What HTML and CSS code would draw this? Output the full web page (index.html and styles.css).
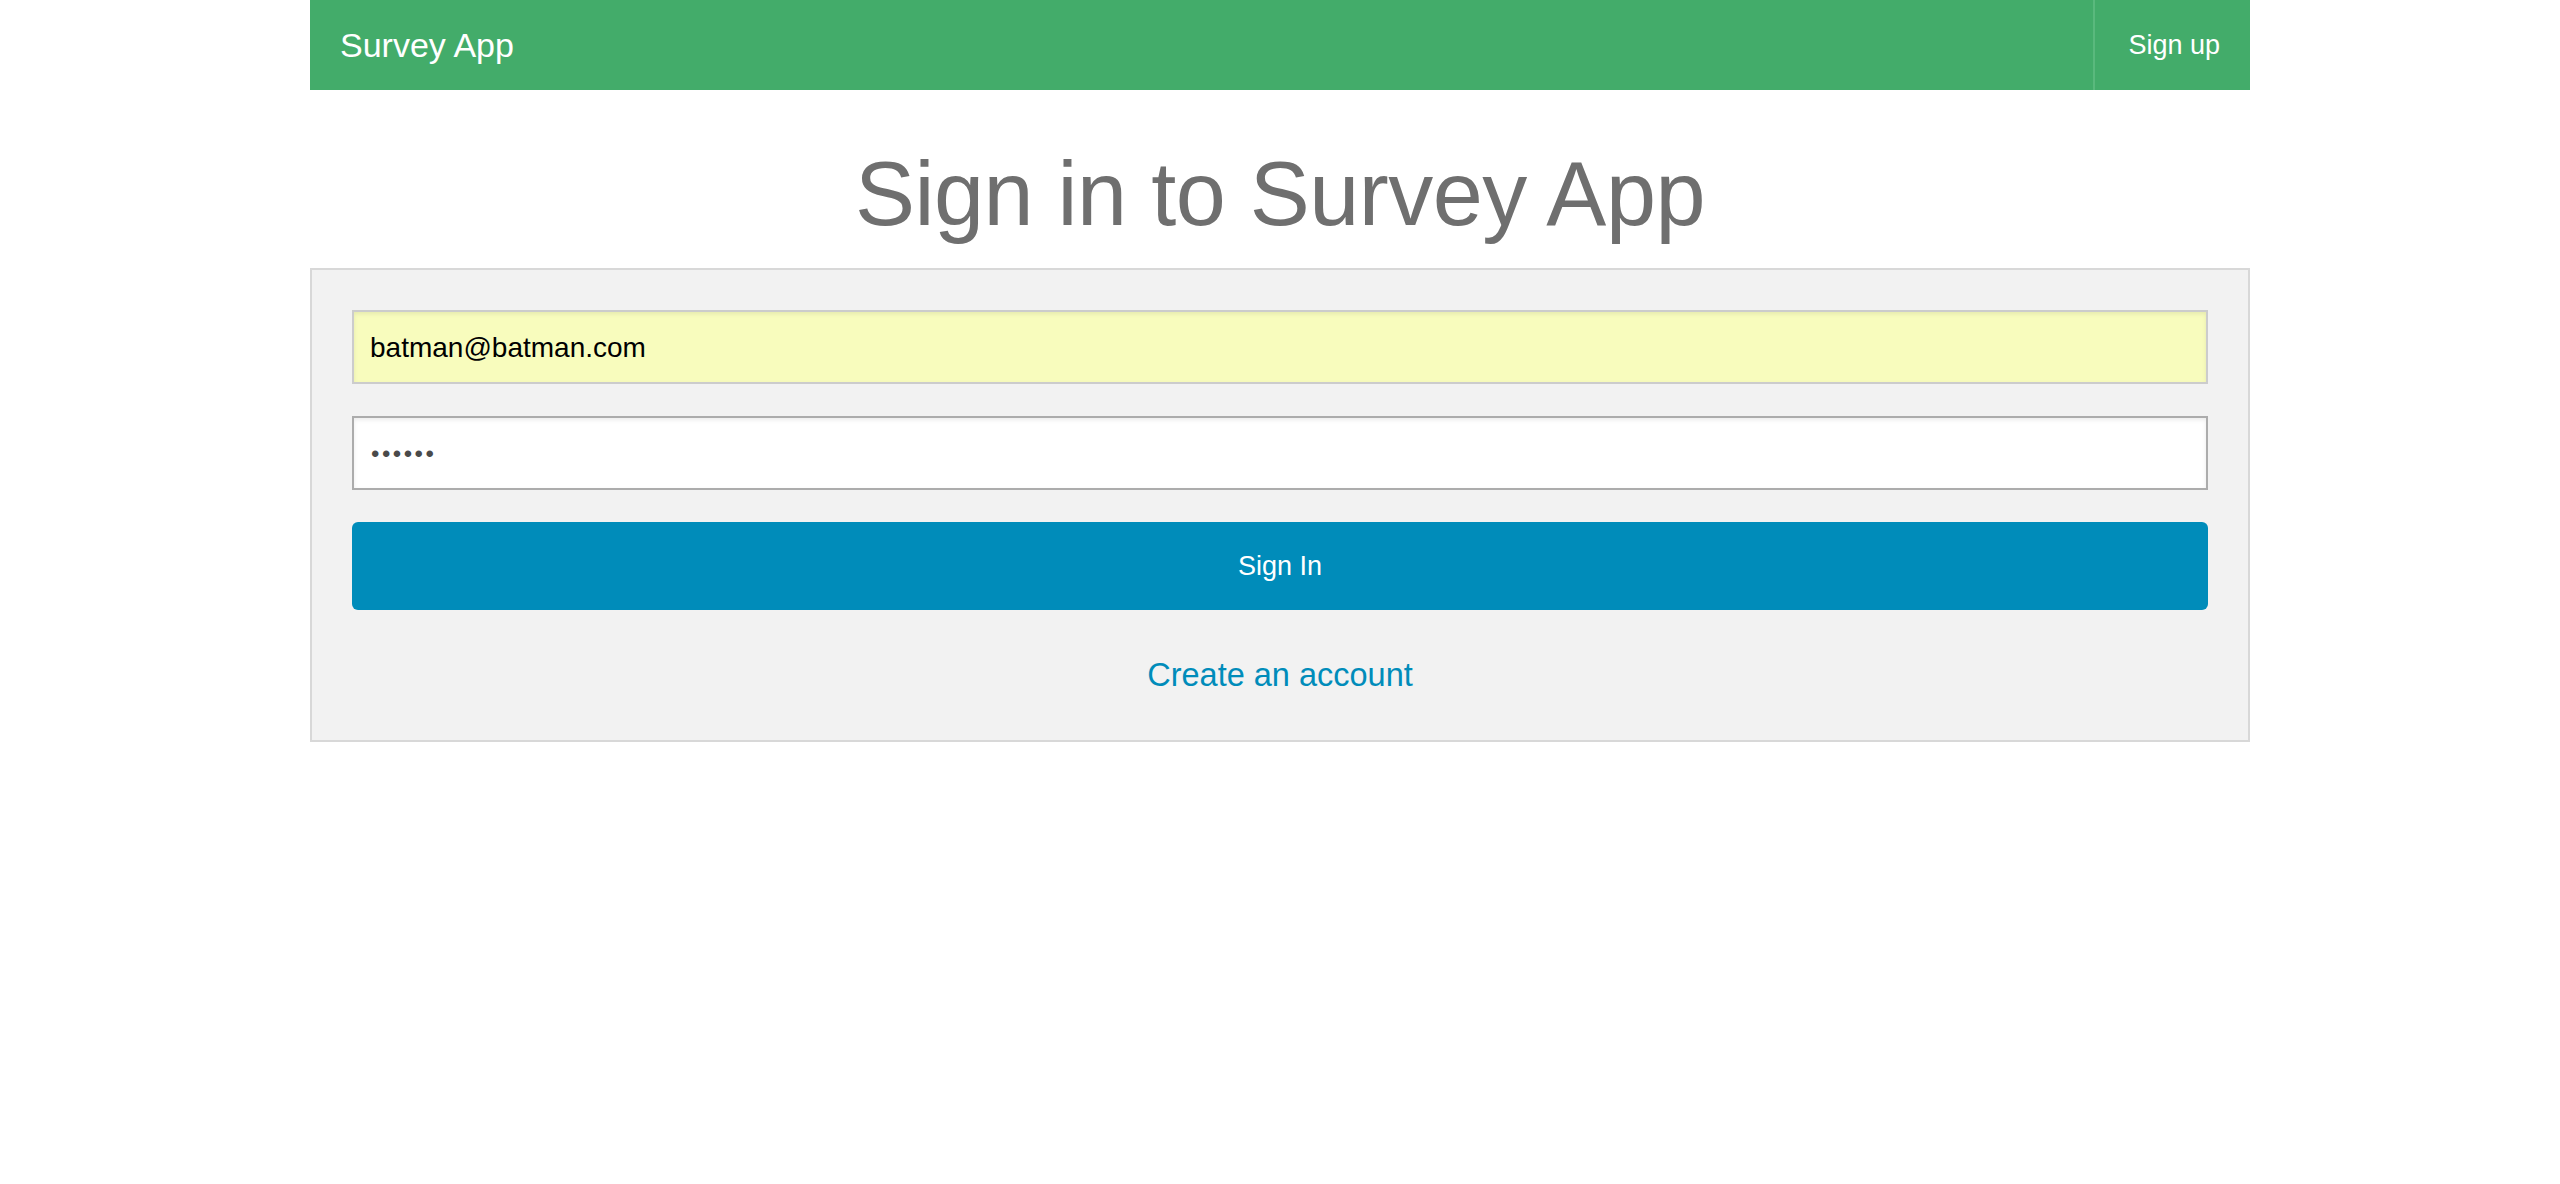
FILE: index.html
```html
<!DOCTYPE html>
<html lang="en">
<head>
<meta charset="utf-8">
<title>Sign in to Survey App</title>
<link rel="stylesheet" href="styles.css">
</head>
<body>
<div class="container">
  <nav class="topbar">
    <a class="brand" href="#">Survey App</a>
    <ul class="nav-right">
      <li><a href="#">Sign up</a></li>
    </ul>
  </nav>
  <h1 class="title">Sign in to Survey App</h1>
  <form class="panel">
    <input class="field field-autofill" type="email" value="batman@batman.com">
    <input class="field field-focus" type="password" value="123456">
    <button class="btn" type="button">Sign In</button>
    <div class="create"><a href="#">Create an account</a></div>
  </form>
</div>
</body>
</html>
```

FILE: styles.css
```css
html, body {
  margin: 0;
  padding: 0;
  background: #ffffff;
  font-family: "Liberation Sans", Arial, Helvetica, sans-serif;
}

.container {
  width: 1940px;
  margin: 0 auto;
}

.topbar {
  display: flex;
  align-items: stretch;
  justify-content: space-between;
  height: 90px;
  background: #43ac6a;
}

.brand {
  display: flex;
  align-items: center;
  padding: 0 30px;
  color: #ffffff;
  font-size: 34px;
  text-decoration: none;
}

.nav-right {
  display: flex;
  margin: 0;
  padding: 0;
  list-style: none;
}

.nav-right li {
  display: flex;
  border-left: 2px solid #5ab97d;
}

.nav-right a {
  display: flex;
  align-items: center;
  padding: 0 30px 0 33px;
  color: #ffffff;
  font-size: 27px;
  text-decoration: none;
}

.title {
  margin: 54px 0 24px;
  font-size: 90px;
  line-height: 100px;
  font-weight: normal;
  letter-spacing: -0.5px;
  color: #6f6f6f;
  text-align: center;
}

.panel {
  display: flex;
  flex-direction: column;
  padding: 40px 40px 41px;
  background: #f2f2f2;
  border: 2px solid #d8d8d8;
}

.field {
  box-sizing: border-box;
  height: 74px;
  margin: 0 0 32px;
  padding: 2px 16px 0;
  border: 2px solid #cccccc;
  border-radius: 0;
  box-shadow: inset 0 2px 4px rgba(0, 0, 0, 0.08);
  font-family: "Liberation Sans", Arial, Helvetica, sans-serif;
  font-size: 28px;
  color: #000000;
  outline: none;
}

.field-autofill {
  background: #f8fcbd;
}

.field-focus {
  background: #ffffff;
  border-color: #acacac;
  color: #4a4a4a;
  font-size: 24px;
  letter-spacing: 2.5px;
  padding-left: 17px;
}

.btn {
  height: 88px;
  margin: 0;
  padding: 0;
  border: none;
  border-radius: 6px;
  background: #008cba;
  color: #ffffff;
  font-family: "Liberation Sans", Arial, Helvetica, sans-serif;
  font-size: 27px;
  cursor: pointer;
}

.create {
  margin-top: 41px;
  font-size: 32px;
  line-height: 48px;
  text-align: center;
}

.create a {
  font-size: 32.5px;
  color: #008cba;
  text-decoration: none;
}
```
